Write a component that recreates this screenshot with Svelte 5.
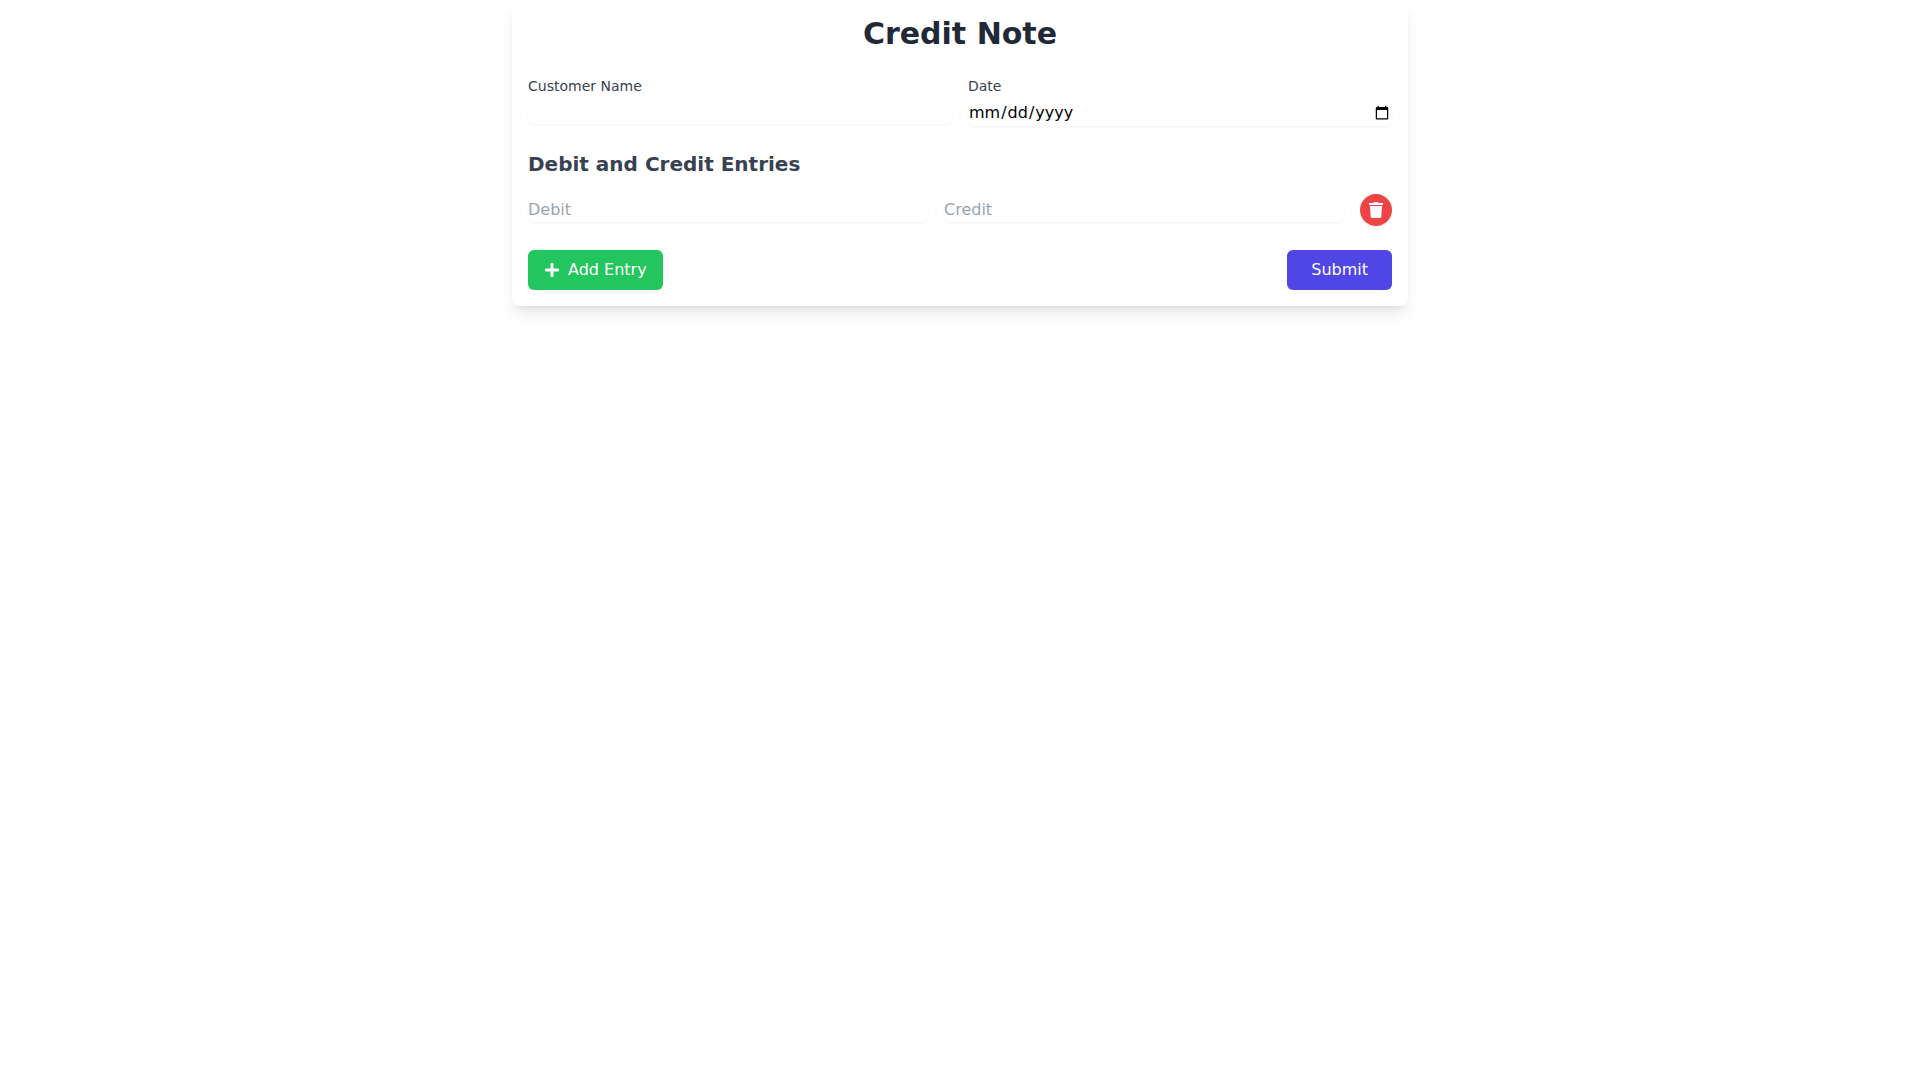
<script lang="ts">
  type Entry = { id: number; debit: string; credit: string };

  let customerName = $state('');
  let date = $state('');
  let nextId = 2;
  let entries = $state<Entry[]>([{ id: 1, debit: '', credit: '' }]);

  function addEntry(): void {
    entries.push({ id: nextId++, debit: '', credit: '' });
  }

  function removeEntry(id: number): void {
    entries = entries.filter((entry) => entry.id !== id);
  }

  function handleSubmit(event: SubmitEvent): void {
    event.preventDefault();
    console.log({ customerName, date, entries: $state.snapshot(entries) });
  }
</script>

<main class="card">
  <h1 class="title">Credit Note</h1>

  <form onsubmit={handleSubmit}>
    <div class="details">
      <div class="field">
        <label for="customer-name">Customer Name</label>
        <input id="customer-name" type="text" bind:value={customerName} />
      </div>
      <div class="field">
        <label for="date">Date</label>
        <input id="date" type="date" bind:value={date} />
      </div>
    </div>

    <h2 class="section-title">Debit and Credit Entries</h2>

    <div class="entries">
      {#each entries as entry (entry.id)}
        <div class="entry">
          <input type="text" inputmode="decimal" placeholder="Debit" aria-label="Debit" bind:value={entry.debit} />
          <input type="text" inputmode="decimal" placeholder="Credit" aria-label="Credit" bind:value={entry.credit} />
          <button type="button" class="remove-btn" aria-label="Remove entry" onclick={() => removeEntry(entry.id)}>
            <svg class="icon" viewBox="0 0 448 512" aria-hidden="true">
              <path d="M432 32H312l-9.4-18.7A24 24 0 0 0 281.1 0H166.8a23.72 23.72 0 0 0-21.4 13.3L136 32H16A16 16 0 0 0 0 48v32a16 16 0 0 0 16 16h416a16 16 0 0 0 16-16V48a16 16 0 0 0-16-16zM53.2 467a48 48 0 0 0 47.9 45h245.8a48 48 0 0 0 47.9-45L416 128H32z" />
            </svg>
          </button>
        </div>
      {/each}
    </div>

    <div class="actions">
      <button type="button" class="btn add-btn" onclick={addEntry}>
        <svg class="icon" viewBox="0 0 448 512" aria-hidden="true">
          <path d="M416 208H272V64c0-17.67-14.33-32-32-32h-32c-17.67 0-32 14.33-32 32v144H32c-17.67 0-32 14.33-32 32v32c0 17.67 14.33 32 32 32h144v144c0 17.67 14.33 32 32 32h32c17.67 0 32-14.33 32-32V304h144c17.67 0 32-14.33 32-32v-32c0-17.67-14.33-32-32-32z" />
        </svg>
        Add Entry
      </button>
      <button type="submit" class="btn submit-btn">Submit</button>
    </div>
  </form>
</main>

<style>
  :global(body) {
    min-height: 100vh;
    margin: 0;
    background: #ffffff;
    font-family: 'DejaVu Sans', sans-serif;
    font-size: 16px;
    line-height: 24px;
  }

  .card {
    box-sizing: border-box;
    max-width: 896px;
    margin: 0 auto;
    padding: 16px;
    background: #ffffff;
    border-radius: 8px;
    box-shadow:
      0 10px 15px -3px rgba(0, 0, 0, 0.1),
      0 4px 6px -4px rgba(0, 0, 0, 0.1);
  }

  .title {
    margin: 0 0 24px;
    font-size: 30px;
    font-weight: 700;
    line-height: 36px;
    text-align: center;
    color: #1f2937;
  }

  .details {
    display: grid;
    grid-template-columns: 1fr 1fr;
    align-items: start;
    gap: 16px;
    margin-bottom: 24px;
  }

  .field {
    display: flex;
    flex-direction: column;
    gap: 4px;
  }

  label {
    font-size: 14px;
    font-weight: 500;
    line-height: 20px;
    color: #374151;
  }

  input {
    box-sizing: border-box;
    width: 100%;
    min-width: 0;
    margin: 0;
    padding: 0;
    border: none;
    border-radius: 6px;
    background: #ffffff;
    box-shadow: 0 1px 2px 0 rgba(0, 0, 0, 0.05);
    font: inherit;
    color: #000000;
  }

  input::placeholder {
    color: #9ca3af;
    opacity: 1;
  }

  .section-title {
    margin: 0 0 16px;
    font-size: 20px;
    font-weight: 600;
    line-height: 28px;
    color: #374151;
  }

  .entries {
    display: flex;
    flex-direction: column;
    gap: 16px;
    margin-bottom: 24px;
  }

  .entry {
    display: flex;
    align-items: center;
    gap: 16px;
  }

  button {
    border: none;
    font: inherit;
    color: #ffffff;
    cursor: pointer;
  }

  .icon {
    display: block;
    width: 16px;
    height: 16px;
    fill: currentColor;
  }

  .remove-btn {
    flex-shrink: 0;
    padding: 8px;
    border-radius: 50%;
    background: #ef4444;
  }

  .remove-btn:hover {
    background: #dc2626;
  }

  .actions {
    display: flex;
    align-items: center;
    justify-content: space-between;
  }

  .btn {
    display: flex;
    align-items: center;
    gap: 8px;
    padding: 8px 16px;
    border-radius: 6px;
  }

  .add-btn {
    background: #22c55e;
  }

  .add-btn:hover {
    background: #16a34a;
  }

  .submit-btn {
    padding: 8px 24px;
    background: #4f46e5;
  }

  .submit-btn:hover {
    background: #4338ca;
  }

  @media (max-width: 640px) {
    .details {
      grid-template-columns: 1fr;
    }
  }
</style>
